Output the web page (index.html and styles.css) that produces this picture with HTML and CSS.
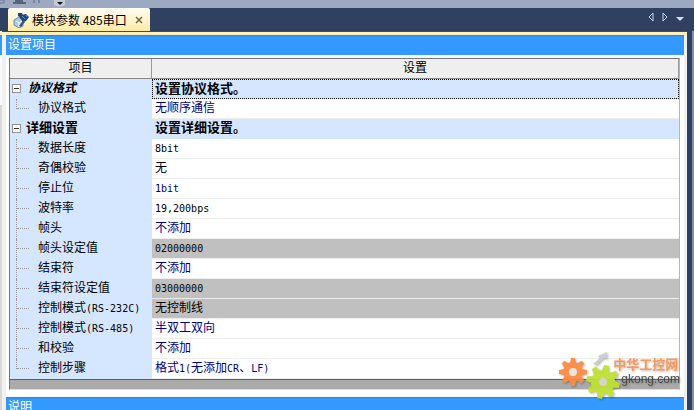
FILE: index.html
```html
<!DOCTYPE html>
<html lang="zh-CN">
<head>
    <meta charset="UTF-8">
    <meta name="viewport" content="width=device-width, initial-scale=1.0">
    <title>模块参数 485串口</title>
    <link rel="stylesheet" href="styles.css">
</head>
<body>
    <div class="window">
        <div class="toolbar">
            <svg width="80" height="8" viewBox="0 0 80 8">
                <path d="M0 0H4V3H0" fill="none" stroke="#6f7a91"/>
                <path d="M13 3h13M15 1h8" stroke="#59637a" stroke-width="2"/>
                <path d="M34 0v3M39 0v3" stroke="#59637a"/>
                <path d="M54 0h11v5q-5 3-11 0z" fill="#c3cad8"/>
                <path d="M57 2h6l-3 3z" fill="#111"/>
            </svg>
        </div>

        <div class="tabbar">
            <div class="tab">
                <svg width="16" height="16" viewBox="0 0 16 16">
                    <path d="M1 8l5-3 4 3v6l-4 2-5-3z" fill="#a9cbe3" stroke="#6c8da8"/>
                    <path d="M3 9l3 2v4M6 11l3-2" fill="none" stroke="#fff"/>
                    <path d="M5 1h4l1 3-2 2-3-2z" fill="#24426e"/>
                    <path d="M8 3l5-1 3 3-3 4-3 1-3-4z" fill="#24426e"/>
                    <path d="M9 4l3 3M13 3l1 2" stroke="#5ba0da"/>
                    <path d="M9 10l2-2 1 2-4 5-2-1z" fill="#35577f"/>
                </svg>
                <span>模块参数 485串口</span>
                <button class="close" type="button" aria-label="关闭">
                    <svg width="8" height="8" viewBox="0 0 8 8"><path d="M1 1l6 6M7 1l-6 6" stroke="#6c5f3c" stroke-width="1.4"/></svg>
                </button>
            </div>
            <div class="tab-nav">
                <button type="button" aria-label="上一个"><svg width="6" height="10" viewBox="0 0 6 10"><path d="M5 1v8L1 5z" fill="none" stroke="#c9d6f2"/></svg></button>
                <button type="button" aria-label="下一个"><svg width="6" height="10" viewBox="0 0 6 10"><path d="M1 1v8L5 5z" fill="none" stroke="#c9d6f2"/></svg></button>
                <button type="button" aria-label="列表"><svg width="8" height="10" viewBox="0 0 8 10"><path d="M0 5h8L4 9z" fill="#d5e0f5"/></svg></button>
            </div>
        </div>

        <div class="main">
            <div class="side left"></div>
            <div class="document">
                <div class="panel">
                    <h1 class="bar">设置项目</h1>
                    <div class="grid">
                        <table>
                            <thead>
                                <tr><th>项目</th><th>设置</th></tr>
                            </thead>
                            <tbody>
                                <tr class="group selected"><td><button class="toggle" type="button" aria-label="折叠"></button><em>协议格式</em></td><td>设置协议格式。</td></tr>
                                <tr class="item last"><td>协议格式</td><td>无顺序通信</td></tr>
                                <tr class="group"><td><button class="toggle" type="button" aria-label="折叠"></button>详细设置</td><td>设置详细设置。</td></tr>
                                <tr class="item default"><td>数据长度</td><td><span class="code">8bit</span></td></tr>
                                <tr class="item default"><td>奇偶校验</td><td>无</td></tr>
                                <tr class="item"><td>停止位</td><td><span class="code">1bit</span></td></tr>
                                <tr class="item default"><td>波特率</td><td><span class="code">19,200bps</span></td></tr>
                                <tr class="item"><td>帧头</td><td>不添加</td></tr>
                                <tr class="item disabled"><td>帧头设定值</td><td><span class="code">02000000</span></td></tr>
                                <tr class="item"><td>结束符</td><td>不添加</td></tr>
                                <tr class="item disabled"><td>结束符设定值</td><td><span class="code">03000000</span></td></tr>
                                <tr class="item disabled"><td>控制模式<span class="code">(RS-232C)</span></td><td>无控制线</td></tr>
                                <tr class="item"><td>控制模式<span class="code">(RS-485)</span></td><td>半双工双向</td></tr>
                                <tr class="item"><td>和校验</td><td>不添加</td></tr>
                                <tr class="item last"><td>控制步骤</td><td>格式<span class="code">1(</span>无添加<span class="code">CR</span>、<span class="code">LF)</span></td></tr>
                            </tbody>
                        </table>
                    </div>
                    <h2 class="bar">说明</h2>
                </div>
            </div>
            <div class="side right"></div>
        </div>

        <div class="watermark">
            <svg width="64" height="52" viewBox="0 0 64 52">
                <defs>
                    <g id="gear">
                        <circle r="10"/>
                        <path id="teeth" d="M-3-9l1-5h4l1 5zM-3 9l1 5h4l1-5z"/>
                        <use href="#teeth" transform="rotate(45)"/>
                        <use href="#teeth" transform="rotate(90)"/>
                        <use href="#teeth" transform="rotate(135)"/>
                    </g>
                </defs>
                <path d="M36 16l7-6-2-2 9-4v7l-3-1-7 7z" fill="#c9cbcc"/>
                <use href="#gear" x="16" y="24" fill="#fb8c42"/>
                <circle cx="16" cy="24" r="4" fill="#e9e3df"/>
                <use href="#gear" transform="translate(46 34) rotate(12) scale(1.2)" fill="#bfe035"/>
                <circle cx="46" cy="34" r="4" fill="#d5d8cd"/>
            </svg>
            <div class="brand">
                <strong>中华工控网</strong>
                <span>gkong.com</span>
            </div>
        </div>
    </div>
</body>
</html>
```

FILE: styles.css
```css
* {
    box-sizing: border-box;
}

body {
    margin: 0;
    font-family: "Noto Sans CJK SC", sans-serif;
    font-size: 12px;
    line-height: 16px;
    color: #000;
}

button {
    display: flex;
    padding: 0;
    border: none;
    background: none;
    cursor: pointer;
}

.window {
    position: relative;
    height: 100vh;
    display: flex;
    flex-direction: column;
    overflow: hidden;
    background-color: #2f4061;
}

.toolbar {
    height: 8px;
    flex: none;
    background-color: #9ca9c1;
}

.toolbar svg {
    display: block;
}

.tabbar {
    height: 23px;
    flex: none;
    display: flex;
    justify-content: space-between;
    align-items: stretch;
    padding: 0 10px 0 8px;
}

.tab {
    display: flex;
    align-items: center;
    width: 142px;
    padding-left: 5px;
    border-radius: 2px 2px 0 0;
    background: linear-gradient(#fffdf4, #ffeaa8);
}

.tab span {
    margin-left: 3px;
    white-space: nowrap;
}

.close {
    margin-left: 8px;
}

.tab-nav {
    display: flex;
    align-items: center;
    gap: 8px;
    padding-bottom: 5px;
}

.main {
    flex: 1;
    min-height: 0;
    display: flex;
}

.side {
    width: 2px;
    flex: none;
}

.left {
    background: linear-gradient(#fff0b8 0 4px, #3399ff 4px 24px, #fafafa 24px 74px, #d8d9d8 74px);
}

.right {
    margin-left: 5px;
    background-color: #8493b3;
}

.document {
    flex: 1;
    min-width: 0;
    padding: 3px 3px 0 4px;
    border-top: 1px solid #4d4a43;
    background: linear-gradient(#fff0b8 0 3px, #f1f2f0 3px);
}

.panel {
    background-color: #fff;
}

.bar {
    height: 20px;
    margin: 0;
    padding: 0 2px;
    border-top: 1px solid #5f7894;
    background-color: #3399ff;
    color: #fff;
    font-size: 12px;
    font-weight: normal;
    line-height: 16px;
}

.grid {
    margin: 3px 4px 7px 3px;
    padding-bottom: 9px;
    border: 1px solid #73777b;
    border-right-color: #b5b5b5;
    border-bottom-color: #ddd;
    background-color: #aaa;
}

table {
    width: 100%;
    table-layout: fixed;
    border-collapse: separate;
    border-spacing: 0;
    border-bottom: 1px solid #5c6168;
}

th {
    height: 20px;
    padding: 0 0 3px;
    border-right: 1px solid #999;
    border-bottom: 1px solid #888;
    background-color: #efefef;
    font-weight: normal;
    line-height: 16px;
}

th:first-child {
    width: 142px;
}

td {
    height: 20px;
    padding: 0 0 3px 3px;
    border-bottom: 1px solid #ededed;
    background-color: #fff;
    color: #00007b;
    line-height: 16px;
    white-space: nowrap;
}

td:first-child {
    position: relative;
    padding-left: 28px;
    border-bottom-color: #d5e6ff;
    background-color: #d5e6ff;
    color: #000;
}

.group td {
    border-bottom-color: #d5e6ff;
    background-color: #d5e6ff;
    color: #000;
    font-size: 13px;
    font-weight: bold;
}

.group td:first-child {
    padding-left: 16px;
}

.group em {
    padding-left: 2px;
    font-size: 12px;
}

.selected td:last-child {
    padding-bottom: 2px;
    padding-left: 2px;
    border: 1px dotted #000;
}

.default td,
.disabled td {
    color: #000;
}

.disabled td:last-child {
    background-color: #c0c0c0;
}

.code {
    font-family: "DejaVu Sans Mono", monospace;
    font-size: 10px;
    line-height: 10px;
}

/* tree lines */
.item td:first-child::before {
    content: "";
    position: absolute;
    left: 6px;
    top: 0;
    height: 20px;
    border-left: 1px dotted #999;
}

.item.last td:first-child::before {
    height: 10px;
}

.item td:first-child::after {
    content: "";
    position: absolute;
    left: 7px;
    top: 9px;
    width: 12px;
    border-top: 1px dotted #999;
}

.toggle {
    position: absolute;
    left: 2px;
    top: 5px;
    width: 9px;
    height: 9px;
    border: 1px solid #919191;
    background: linear-gradient(#333, #333) center / 5px 1px no-repeat #fff;
}

.watermark {
    position: absolute;
    right: 14px;
    bottom: 10px;
    display: flex;
    align-items: center;
    filter: drop-shadow(1px 1px 1px rgba(0, 0, 0, 0.3));
    opacity: 0.95;
}

.watermark svg {
    margin-right: -8px;
}

.brand {
    display: flex;
    flex-direction: column;
    padding-bottom: 4px;
    color: #444;
    font-family: "Liberation Sans", "Noto Sans CJK SC", sans-serif;
    font-size: 12px;
    line-height: 14px;
}

.brand strong {
    color: #ff9148;
    font-size: 13px;
}

.brand span {
    padding-left: 8px;
}
```
